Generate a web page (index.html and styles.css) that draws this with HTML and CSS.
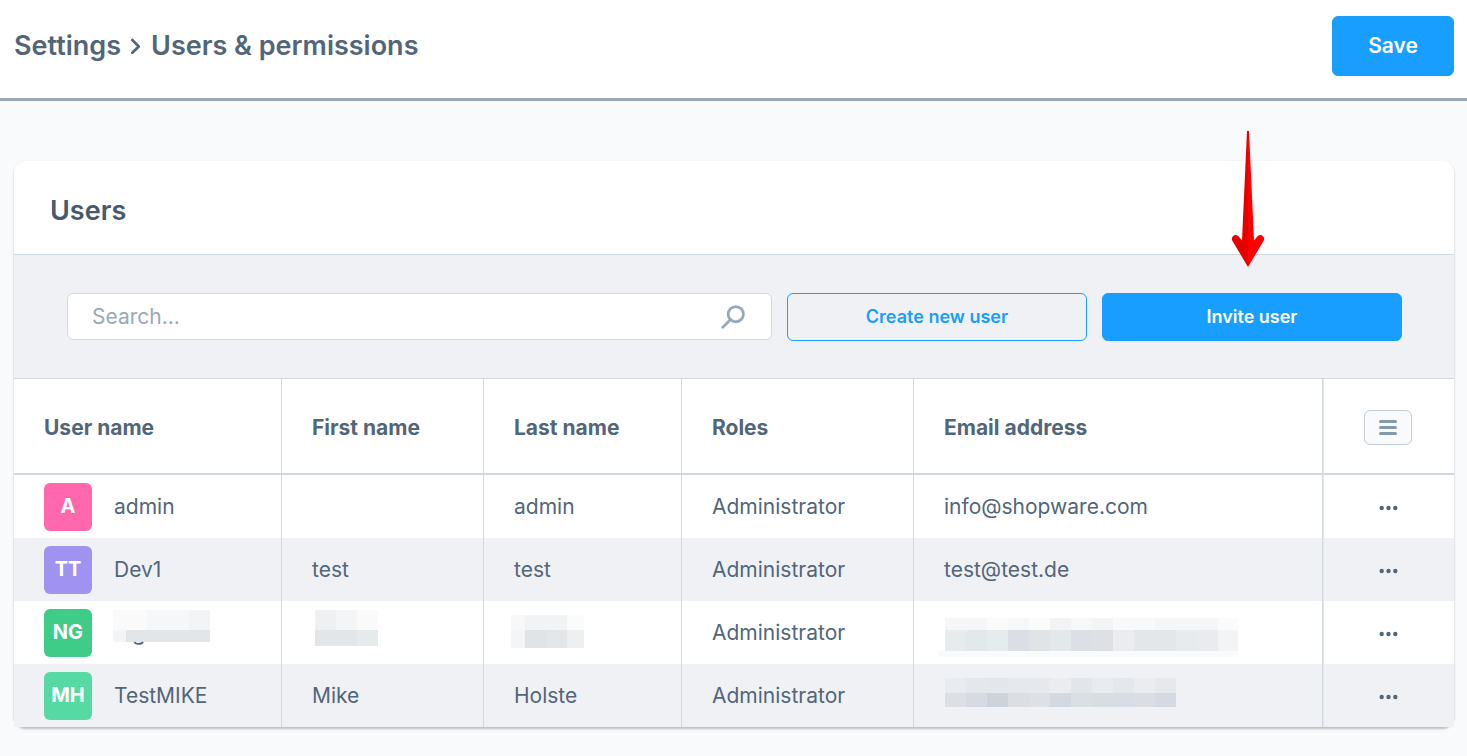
FILE: index.html
```html
<!DOCTYPE html>
<html lang="en">
<head>
<meta charset="utf-8">
<meta name="viewport" content="width=device-width, initial-scale=1">
<title>Users &amp; permissions</title>
<link rel="stylesheet" href="styles.css">
</head>
<body>
<header class="page-header">
  <nav class="breadcrumb" aria-label="Breadcrumb">
    <a href="#settings">Settings</a>
    <svg class="chevron" width="10" height="16" viewBox="0 0 10 16" aria-hidden="true"><path d="M1.300 2 7.800 8.500l-6.500 6.300" fill="none" stroke="currentColor" stroke-width="2.600" stroke-linecap="round" stroke-linejoin="round"/></svg>
    <span aria-current="page">Users &amp; permissions</span>
  </nav>
  <button class="btn btn-primary btn-save" type="button">Save</button>
</header>

<main class="content">
  <section class="card">
    <h1 class="card-title">Users</h1>

    <div class="toolbar">
      <div class="search">
        <input class="search-input" type="text" placeholder="Search..." aria-label="Search users">
        <svg class="search-icon" width="24" height="24" viewBox="0 0 24 24" aria-hidden="true"><g fill="none" stroke="currentColor" stroke-width="2.800" stroke-linecap="round"><circle cx="14.800" cy="9.200" r="7.600"/><path d="M9.300 14.700 1.800 22.200"/></g></svg>
      </div>
      <button class="btn btn-outline" type="button">Create new user</button>
      <div class="invite">
        <svg class="pointer" width="34" height="138" viewBox="0 0 34 138" aria-hidden="true">
          <path d="M16 1h1v136L1.200 110.500C-.5 107 4 103 7.200 106L11 110.500Z" fill="#e60000"/>
          <path d="M17 1h1l5 109.500 3.800-4.500c3.200-3 7.700 1 6 4.500L17 137Z" fill="#ff0000"/>
        </svg>
        <button class="btn btn-primary" type="button">Invite user</button>
      </div>
    </div>

    <table class="users">
      <colgroup>
        <col class="col-user"><col class="col-first"><col class="col-last"><col class="col-roles"><col><col class="col-actions">
      </colgroup>
      <thead>
        <tr>
          <th scope="col">User name</th>
          <th scope="col">First name</th>
          <th scope="col">Last name</th>
          <th scope="col">Roles</th>
          <th scope="col">Email address</th>
          <th scope="col" class="actions">
            <button class="columns-btn" type="button" aria-label="Column settings"><svg width="18" height="15" viewBox="0 0 18 15" aria-hidden="true"><path d="M1.500 1.500h15M1.500 7.500h15M1.500 13.500h15" stroke="currentColor" stroke-width="3" stroke-linecap="round"/></svg></button>
          </th>
        </tr>
      </thead>
      <tbody>
        <tr>
          <td><div class="user"><span class="avatar avatar-pink">A</span><span>admin</span></div></td>
          <td></td>
          <td>admin</td>
          <td>Administrator</td>
          <td>info@shopware.com</td>
          <td class="actions"><button class="more-btn" type="button" aria-label="Actions for admin"><svg width="19" height="6" viewBox="0 0 19 6" aria-hidden="true" fill="currentColor"><circle cx="2.700" cy="3" r="2.200"/><circle cx="9.500" cy="3" r="2.200"/><circle cx="16.300" cy="3" r="2.200"/></svg></button></td>
        </tr>
        <tr>
          <td><div class="user"><span class="avatar avatar-violet">TT</span><span>Dev1</span></div></td>
          <td>test</td>
          <td>test</td>
          <td>Administrator</td>
          <td>test@test.de</td>
          <td class="actions"><button class="more-btn" type="button" aria-label="Actions for Dev1"><svg width="19" height="6" viewBox="0 0 19 6" aria-hidden="true" fill="currentColor"><circle cx="2.700" cy="3" r="2.200"/><circle cx="9.500" cy="3" r="2.200"/><circle cx="16.300" cy="3" r="2.200"/></svg></button></td>
        </tr>
        <tr>
          <td><div class="user"><span class="avatar avatar-green">NG</span>
            <svg class="mosaic mosaic-user" width="97" height="48" viewBox="0 0 97 48" shape-rendering="crispEdges" role="img" aria-label="Hidden user name"><path fill="#fafafa" d="M0 1h34v20H0z"/><path fill="#f5f7f9" d="M34 1h42v20H34z"/><path fill="#f3f4f6" d="M76 1h21v20H76z"/><path fill="#f4f5f7" d="M0 21h13v12H0z"/><path fill="#e2e6e8" d="M13 21h84v12H13z"/><path d="M21.500 33c1 2.600 7.200 2.600 8.500 0" fill="none" stroke="#52667a" stroke-width="1.800" shape-rendering="auto"/></svg></div></td>
          <td><svg class="mosaic" width="66" height="48" viewBox="0 0 66 48" shape-rendering="crispEdges" role="img" aria-label="Hidden first name"><path fill="#eff0f2" d="M3 1h21v20H3z"/><path fill="#f4f5f7" d="M24 1h21v20H24z"/><path fill="#fafafa" d="M45 1h21v20H45z"/><path fill="#e2e6e9" d="M3 21h42v16H3z"/><path fill="#e5eaed" d="M45 21h21v16H45z"/></svg></td>
          <td><svg class="mosaic mosaic-last" width="73" height="48" viewBox="0 0 73 48" shape-rendering="crispEdges" role="img" aria-label="Hidden last name"><path fill="#f8f8f8" d="M0 6h14v15H0z"/><path fill="#f2f3f5" d="M14 6h42v15H14z"/><path fill="#fafcfb" d="M56 6h17v15H56z"/><path fill="#f4f5f7" d="M0 21h14v18H0z"/><path fill="#e0e4e7" d="M14 21h21v18H14z"/><path fill="#e3e7ea" d="M35 21h21v18H35z"/><path fill="#eeeff1" d="M56 21h17v18H56z"/></svg></td>
          <td>Administrator</td>
          <td><svg class="mosaic mosaic-email" width="300" height="48" viewBox="0 0 300 48" shape-rendering="crispEdges" role="img" aria-label="Hidden email address"><path fill="#f5f6f8" d="M7 9h42v12H7z"/><path fill="#fafafa" d="M49 9h21v12H49z"/><path fill="#f6f7f9" d="M70 9h21v12H70z"/><path fill="#fafcfb" d="M91 9h21v12H91z"/><path fill="#f2f3f4" d="M112 9h21v12H112z"/><path fill="#f6f7f9" d="M133 9h21v12H133z"/><path fill="#f3f4f6" d="M154 9h21v12H154z"/><path fill="#f8f9fb" d="M175 9h42v12H175z"/><path fill="#f5f6f8" d="M217 9h63v12H217z"/><path fill="#fbfbfb" d="M280 9h20v12H280z"/><path fill="#e6ebee" d="M7 21h21v21H7z"/><path fill="#e3e8ea" d="M28 21h21v21H28z"/><path fill="#e6ebee" d="M49 21h21v21H49z"/><path fill="#dbdfe5" d="M70 21h21v21H70z"/><path fill="#e0e4e7" d="M91 21h21v21H91z"/><path fill="#e3e8ea" d="M112 21h21v21H112z"/><path fill="#dce0e6" d="M133 21h21v21H133z"/><path fill="#dde1e4" d="M154 21h21v21H154z"/><path fill="#ebecef" d="M175 21h21v21H175z"/><path fill="#e3e7ea" d="M196 21h42v21H196z"/><path fill="#e7ebee" d="M238 21h21v21H238z"/><path fill="#e9ebee" d="M259 21h21v21H259z"/><path fill="#f3f4f6" d="M280 21h20v21H280z"/><path fill="#f9fafc" d="M0 42h300v6H0z"/></svg></td>
          <td class="actions"><button class="more-btn" type="button" aria-label="Actions for NG"><svg width="19" height="6" viewBox="0 0 19 6" aria-hidden="true" fill="currentColor"><circle cx="2.700" cy="3" r="2.200"/><circle cx="9.500" cy="3" r="2.200"/><circle cx="16.300" cy="3" r="2.200"/></svg></button></td>
        </tr>
        <tr>
          <td><div class="user"><span class="avatar avatar-mint">MH</span><span>TestMIKE</span></div></td>
          <td>Mike</td>
          <td>Holste</td>
          <td>Administrator</td>
          <td><svg class="mosaic mosaic-email" width="238" height="48" viewBox="0 0 238 48" shape-rendering="crispEdges" role="img" aria-label="Hidden email address"><path fill="#e8ebef" d="M7 6h21v15H7z"/><path fill="#e4e7eb" d="M28 6h21v15H28z"/><path fill="#e3e6ea" d="M49 6h21v15H49z"/><path fill="#e5e8ec" d="M70 6h42v15H70z"/><path fill="#ebecef" d="M112 6h21v15H112z"/><path fill="#e2e5ea" d="M133 6h21v15H133z"/><path fill="#e8ebf0" d="M154 6h21v15H154z"/><path fill="#e4e7ec" d="M175 6h21v15H175z"/><path fill="#ebecef" d="M196 6h21v15H196z"/><path fill="#e5e9ec" d="M217 6h21v15H217z"/><path fill="#dcdfe3" d="M7 21h21v14H7z"/><path fill="#d5dae3" d="M28 21h21v14H28z"/><path fill="#ced3da" d="M49 21h21v14H49z"/><path fill="#dbdee3" d="M70 21h21v14H70z"/><path fill="#dde1e5" d="M91 21h21v14H91z"/><path fill="#d3d9e1" d="M112 21h21v14H112z"/><path fill="#d9dfe2" d="M133 21h21v14H133z"/><path fill="#d7dde0" d="M154 21h21v14H154z"/><path fill="#d8dce4" d="M175 21h21v14H175z"/><path fill="#dadde1" d="M196 21h21v14H196z"/><path fill="#d5d9e1" d="M217 21h21v14H217z"/></svg></td>
          <td class="actions"><button class="more-btn" type="button" aria-label="Actions for TestMIKE"><svg width="19" height="6" viewBox="0 0 19 6" aria-hidden="true" fill="currentColor"><circle cx="2.700" cy="3" r="2.200"/><circle cx="9.500" cy="3" r="2.200"/><circle cx="16.300" cy="3" r="2.200"/></svg></button></td>
        </tr>
      </tbody>
    </table>
  </section>
</main>
</body>
</html>
```

FILE: styles.css
```css
* {
  box-sizing: border-box;
}

body {
  margin: 0;
  min-height: 100vh;
  background: #f9fafc;
  color: #52667a;
  font-family: Inter, "Liberation Sans", sans-serif;
  font-size: 21px;
  line-height: 32px;
}

button,
input {
  font: inherit;
  color: inherit;
}

svg {
  display: block;
}

.page-header {
  display: flex;
  align-items: flex-start;
  justify-content: space-between;
  padding: 16px 13px 22px 14px;
  background: #fff;
  border-bottom: 3px solid #9aa8b5;
}

.breadcrumb {
  display: flex;
  align-items: center;
  gap: 10px;
  height: 60px;
  font-size: 27px;
  font-weight: 600;
}

.breadcrumb a {
  color: inherit;
  text-decoration: none;
}

.btn {
  width: 300px;
  height: 48px;
  padding: 0 16px;
  border: 1px solid #189eff;
  border-radius: 6px;
  font-size: 18px;
  font-weight: 600;
  cursor: pointer;
}

.btn-primary {
  background: #189eff;
  color: #fff;
}

.btn-outline {
  background: transparent;
  color: #189eff;
}

.btn-save {
  width: 122px;
  height: 60px;
  font-size: 21px;
}

.content {
  padding: 60px 13px 28px 14px;
}

.card {
  background: #fff;
  border-radius: 12px;
  box-shadow: 0 2px 2px rgba(0, 0, 0, .12), 0 3px 2px rgba(0, 0, 0, .06), 0 1px 3px rgba(0, 0, 0, .1);
}

.card-title {
  margin: 0;
  padding: 34px 36px 27px;
  font-size: 27px;
  font-weight: 600;
  line-height: 32px;
  color: #475a6d;
}

.toolbar {
  display: flex;
  align-items: flex-start;
  gap: 15px;
  padding: 38px 52px 37px 53px;
  background: #f0f1f5;
  border-top: 1px solid #d1d9e0;
  border-bottom: 1px solid #d1d9e0;
}

.search {
  display: flex;
  align-items: center;
  flex: 1;
  height: 47px;
  padding-right: 26px;
  background: #fff;
  border: 1px solid #d1d9e0;
  border-radius: 6px;
}

.search-input {
  flex: 1;
  min-width: 0;
  padding: 0 24px;
  border: 0;
  outline: 0;
  background: transparent;
}

.search-input::placeholder {
  color: #9aa8b9;
  opacity: 1;
}

.search-icon {
  color: #98a8bc;
}

.invite {
  position: relative;
  display: flex;
}

.pointer {
  position: absolute;
  right: 137px;
  bottom: 73px;
  pointer-events: none;
}

.users {
  width: 100%;
  table-layout: fixed;
  border-collapse: separate;
  border-spacing: 0;
}

.col-user { width: 268px; }
.col-first { width: 202px; }
.col-last { width: 198px; }
.col-roles { width: 232px; }
.col-actions { width: 131px; }

.users th,
.users td {
  padding: 0 0 0 30px;
  border-right: 1px solid #d1d9e0;
  text-align: left;
  vertical-align: middle;
}

.users th {
  height: 96px;
  padding-top: 3px;
  border-bottom: 2px solid #d1d9e0;
  font-weight: 700;
}

.users td {
  height: 63px;
}

.users tbody tr:nth-child(even) {
  background: #f0f1f5;
}

.users .actions {
  padding: 0 2px 0 0;
  border-left: 1px solid #e3e8ed;
  border-right: 0;
}

.users th.actions {
  padding-top: 2px;
}

.user {
  display: flex;
  align-items: center;
  gap: 22px;
}

.avatar {
  width: 48px;
  height: 48px;
  border-radius: 6px;
  color: #fff;
  font-size: 20px;
  font-weight: 700;
  line-height: 46px;
  text-align: center;
}

.avatar-pink { background: #ff68ac; }
.avatar-violet { background: #a092f0; }
.avatar-green { background: #3ecc88; }
.avatar-mint { background: #57d9a3; }

.mosaic-user {
  margin-left: -1px;
}

.mosaic-last {
  margin-left: -3px;
}

.mosaic-email {
  margin-left: -6px;
}

.columns-btn,
.more-btn {
  display: flex;
  align-items: center;
  justify-content: center;
  width: 48px;
  margin: 0 auto;
  padding: 0;
  border: 0;
  background: transparent;
  cursor: pointer;
}

.columns-btn {
  height: 35px;
  background: #f9fafc;
  border: 1px solid #c2cdd8;
  border-radius: 6px;
  color: #8599ad;
}

.more-btn {
  height: 32px;
  padding-top: 3px;
}
```
